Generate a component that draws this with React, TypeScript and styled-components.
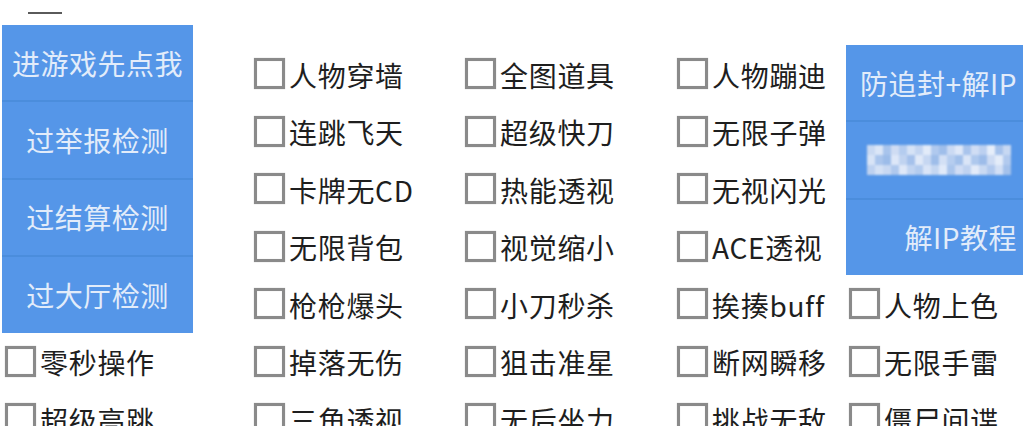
import React from "react";
import styled, { createGlobalStyle } from "styled-components";

const GlobalStyle = createGlobalStyle`
  html, body {
    margin: 0;
    padding: 0;
    background: #ffffff;
  }
  body {
    font-family: "Noto Sans CJK SC", "Noto Sans", sans-serif;
    overflow: hidden;
  }
`;

const BLUE = "#5596e8";

const Page = styled.div`
  width: 1028px;
  height: 426px;
  padding-top: 12px;
  box-sizing: border-box;
  overflow: hidden;
`;

const TabMark = styled.div`
  margin-left: 28px;
  width: 34px;
  height: 2px;
  background: #5a5a5a;
`;

const Board = styled.div`
  margin-top: 11px;
  padding-left: 2px;
  display: grid;
  grid-template-columns: 249px 211px 212px 172px 177px;
  grid-template-rows: 20px repeat(7, 57.5px);
`;

const ButtonStack = styled.div<{ $col: number; $rows: string; $align: "center" | "flex-end" }>`
  grid-column: ${(p) => p.$col};
  grid-row: ${(p) => p.$rows};
  width: ${(p) => (p.$col === 1 ? "191px" : "177px")};
  display: flex;
  flex-direction: column;
  background: ${BLUE};

  & > * {
    justify-content: ${(p) => p.$align};
  }
`;

const PanelButton = styled.div`
  flex: 1;
  display: flex;
  align-items: center;
  padding: 0 6px;
  color: #e2ecfa;
  font-size: 28px;
  letter-spacing: 0.5px;
  white-space: nowrap;
  border-top: 2px solid #4b8ddc;

  &:first-child {
    border-top: none;
  }
`;

const Option = styled.label<{ $col: number; $row: number }>`
  grid-column: ${(p) => p.$col};
  grid-row: ${(p) => p.$row + 1};
  display: flex;
  align-items: center;
  gap: 4px;
  padding-left: 3px;
  white-space: nowrap;
`;

const Box = styled.span`
  width: 31px;
  height: 31px;
  box-sizing: border-box;
  border: 3px solid #8a8a8a;
  box-shadow: 0 0 1px #bdbdbd, inset 0 0 1px #c8c8c8;
  background: #ffffff;
  flex: none;
`;

const Label = styled.span`
  font-size: 28px;
  color: #1e1e1e;
  letter-spacing: 0.7px;
  line-height: 1;
  padding-top: 2px;
`;

/* pixelated mosaic that hides the group number */
const Mosaic = () => {
  const cells = [
    [0, 0, "#c9d9f2"], [8, 0, "#dbe6f7"], [16, 0, "#a8c4ec"], [24, 0, "#cfdcf3"],
    [32, 0, "#b4ccef"], [40, 0, "#d6e3f6"], [48, 0, "#c3d5f1"], [56, 0, "#e2ebf9"],
    [64, 0, "#b0c9ee"], [72, 0, "#9fbeea"], [80, 0, "#cbdaf3"], [88, 0, "#dfe8f8"],
    [96, 0, "#a9c4ec"], [104, 0, "#d0ddf4"], [112, 0, "#bcd0f0"], [120, 0, "#e6eefa"],
    [128, 0, "#a6c2eb"], [136, 0, "#c7d8f2"],
    [0, 10, "#d8e4f6"], [8, 10, "#aac5ec"], [16, 10, "#9cbce9"], [24, 10, "#dde7f8"],
    [32, 10, "#c0d3f0"], [40, 10, "#a5c1eb"], [48, 10, "#e0e9f8"], [56, 10, "#c6d7f2"],
    [64, 10, "#9ebde9"], [72, 10, "#d3e0f5"], [80, 10, "#b6cdef"], [88, 10, "#a2c0ea"],
    [96, 10, "#dae5f7"], [104, 10, "#aec8ed"], [112, 10, "#9dbce9"], [120, 10, "#cddbf3"],
    [128, 10, "#e4ecf9"], [136, 10, "#b2caee"],
    [0, 20, "#bdd1f0"], [8, 20, "#d4e1f5"], [16, 20, "#c8d8f2"], [24, 20, "#afc8ed"],
    [32, 20, "#dfe8f8"], [40, 20, "#c1d4f1"], [48, 20, "#b3cbee"], [56, 20, "#d9e4f7"],
    [64, 20, "#c4d6f1"], [72, 20, "#e1eaf9"], [80, 20, "#aac5ec"], [88, 20, "#cfdcf4"],
    [96, 20, "#bfd2f0"], [104, 20, "#e3ebf9"], [112, 20, "#c9d9f2"], [120, 20, "#b1c9ee"],
    [128, 20, "#d2dff5"], [136, 20, "#a4c1eb"],
  ] as const;
  return (
    <svg width="144" height="30" viewBox="0 0 144 30" style={{ filter: "blur(1.2px)" }}>
      {cells.map(([x, y, c], i) => (
        <rect key={i} x={x} y={y} width={8} height={10} fill={c} />
      ))}
    </svg>
  );
};

const MosaicButton = styled(PanelButton)`
  && {
    justify-content: center;
    padding-left: 14px;
  }
`;

type Opt = { label: string; col: number; row: number };

const options: Opt[] = [
  { label: "人物穿墙", col: 2, row: 1 },
  { label: "全图道具", col: 3, row: 1 },
  { label: "人物蹦迪", col: 4, row: 1 },
  { label: "连跳飞天", col: 2, row: 2 },
  { label: "超级快刀", col: 3, row: 2 },
  { label: "无限子弹", col: 4, row: 2 },
  { label: "卡牌无CD", col: 2, row: 3 },
  { label: "热能透视", col: 3, row: 3 },
  { label: "无视闪光", col: 4, row: 3 },
  { label: "无限背包", col: 2, row: 4 },
  { label: "视觉缩小", col: 3, row: 4 },
  { label: "ACE透视", col: 4, row: 4 },
  { label: "枪枪爆头", col: 2, row: 5 },
  { label: "小刀秒杀", col: 3, row: 5 },
  { label: "挨揍buff", col: 4, row: 5 },
  { label: "人物上色", col: 5, row: 5 },
  { label: "零秒操作", col: 1, row: 6 },
  { label: "掉落无伤", col: 2, row: 6 },
  { label: "狙击准星", col: 3, row: 6 },
  { label: "断网瞬移", col: 4, row: 6 },
  { label: "无限手雷", col: 5, row: 6 },
  { label: "超级高跳", col: 1, row: 7 },
  { label: "三角透视", col: 2, row: 7 },
  { label: "无后坐力", col: 3, row: 7 },
  { label: "挑战无敌", col: 4, row: 7 },
  { label: "僵尸间谍", col: 5, row: 7 },
];

export default function App() {
  return (
    <Page>
      <GlobalStyle />
      <TabMark />
      <Board>
        <ButtonStack $col={1} $rows="1 / 7" $align="center">
          <PanelButton>进游戏先点我</PanelButton>
          <PanelButton>过举报检测</PanelButton>
          <PanelButton>过结算检测</PanelButton>
          <PanelButton>过大厅检测</PanelButton>
        </ButtonStack>

        {options.map((o) => (
          <Option key={o.label} $col={o.col} $row={o.row}>
            <Box />
            <Label>{o.label}</Label>
          </Option>
        ))}

        <ButtonStack $col={5} $rows="2 / 6" $align="flex-end">
          <PanelButton>防追封+解IP</PanelButton>
          <MosaicButton>
            <Mosaic />
          </MosaicButton>
          <PanelButton>解IP教程</PanelButton>
        </ButtonStack>
      </Board>
    </Page>
  );
}
